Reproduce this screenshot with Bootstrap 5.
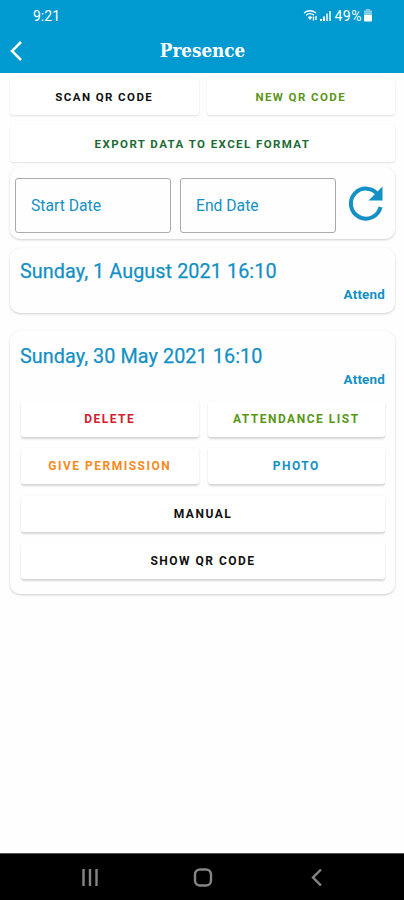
<!DOCTYPE html>
<html lang="en">
<head>
<meta charset="utf-8">
<meta name="viewport" content="width=device-width, initial-scale=1">
<title>Presence</title>
<link href="https://cdn.jsdelivr.net/npm/bootstrap@5.3.0/dist/css/bootstrap.min.css" rel="stylesheet">
<style>
:root { --brand: #0099d0; --ink: #1490c4; }
body { font-family: Roboto, sans-serif; background: #fefefe; }
.topbar { height: 73px; background: var(--brand); }
.statusline { height: 31px; padding: 0 31px 0 33px; font-size: 14px; line-height: 32px; }
.percent { margin-left: 1px; margin-right: 1px; letter-spacing: .5px; }
.titlebar { height: 38px; }
.titlebar h1 { font: bold 18.7px/38px "DejaVu Serif Condensed", "DejaVu Serif", serif; font-stretch: condensed; padding-right: 23px; }
.screen { padding: 6px 9px 0 10px; }
.act { height: 36px; padding: 0; border: 0; border-radius: 3px; background: #fff; font-weight: 700; font-size: 11.5px; line-height: 36px; letter-spacing: 1.42px; box-shadow: 0 1px 2px rgba(0,0,0,.11), 0 0 1px rgba(0,0,0,.08); }
.export { margin-top: 10px; height: 37px; }
.panel { border: 0; border-radius: 10px; background: #fefefe; box-shadow: 0 1px 2.5px rgba(0,0,0,.19); }
.dates { height: 72px; margin-top: 5px; padding: 4px 0 0 5px; gap: 9px; }
.dates svg { margin-left: 3px; margin-top: -5px; }
.field { width: 156px; height: 55px; border: 1px solid #aaa; border-radius: 3px; padding-left: 15px; font-size: 15.7px; line-height: 54px; color: var(--ink); }
.first, .second { padding: 12px 10px 0; }
.first { height: 65px; margin-top: 9px; }
.second { height: 263px; margin-top: 18px; padding-top: 14px; }
.when { font-size: 19.8px; letter-spacing: .08px; line-height: 24px; color: var(--ink); -webkit-text-stroke: .25px var(--ink); }
.state { margin-top: 3px; font-size: 13.4px; letter-spacing: .2px; line-height: 16px; font-weight: 700; color: var(--ink); }
.inner { grid-template-columns: 1fr 1fr; gap: 11.3px 9px; margin: 13px 0 0 1px; }
.inner .act { font-size: 12px; letter-spacing: 1.5px; box-shadow: 0 1.5px 2px rgba(0,0,0,.16); }
.inner .wide { grid-column: span 2; }
.ink { color: var(--ink); }
.leaf { color: #5a9618; }
.pine { color: #1d6b35; }
.rose { color: #cf2030; }
.amber { color: #f58a1f; }
.coal { color: #111; }
.softkeys { height: 47px; background: #000; border-top: 1px solid #555; }
</style>
</head>
<body>
<div class="d-flex flex-column vh-100 overflow-hidden">
  <header class="topbar text-white flex-shrink-0">
    <div class="statusline d-flex justify-content-between">
      <span>9:21</span>
      <div class="d-flex align-items-center">
        <svg width="31" height="14" viewBox="0 0 31 14" fill="none" stroke="#fff">
          <path d="M1 4Q7 -.5 13 4M3 6.300Q7 3 11 6.300" stroke-width="1.3"/>
          <path d="M4.700 8.300Q7 6.300 9.300 8.300L7 11Z" fill="#fff" stroke="none"/>
          <path d="M10.500 7.500v4M13 7v4" stroke-width="1.4"/>
          <path d="M18 12V10M21 12V7.500" stroke-width="2"/>
          <path d="M24 12V4.500M27 12V2" stroke-width="2" opacity=".75"/>
        </svg>
        <span class="percent">49%</span>
        <svg width="10" height="13" viewBox="0 0 10 13" fill="#fff"><path d="M3 0h4v1.500h2V6H1V1.500h2Z" opacity=".5"/><path d="M1 6h8v5.500a1 1 0 0 1-1 1H2a1 1 0 0 1-1-1Z"/></svg>
      </div>
    </div>
    <div class="titlebar d-flex align-items-center">
      <svg class="ms-2" width="16" height="22" viewBox="0 0 16 22" fill="none" stroke="#fff" stroke-width="2.5"><path d="M13 3L4 12l9 9"/></svg>
      <h1 class="m-0 flex-grow-1 text-center">Presence</h1>
    </div>
  </header>

  <main class="screen flex-grow-1">
    <div class="d-flex gap-2">
      <button class="btn act coal flex-fill w-50">SCAN QR CODE</button>
      <button class="btn act leaf flex-fill w-50">NEW QR CODE</button>
    </div>
    <button class="btn act pine w-100 d-block export">EXPORT DATA TO EXCEL FORMAT</button>
    <section class="card panel flex-row align-items-center dates">
      <div class="field">Start Date</div>
      <div class="field">End Date</div>
      <svg width="36" height="36" viewBox="0 0 36 36"><path d="M30.500 10.500A15 15 0 1 0 32.500 22" fill="none" stroke="#1490c4" stroke-width="4"/><path d="M34.500 1.500V15.500H20.500Z" fill="#1490c4"/></svg>
    </section>
    <section class="card panel first">
      <div class="when">Sunday, 1 August 2021 16:10</div>
      <div class="state text-end">Attend</div>
    </section>
    <section class="card panel second">
      <div class="when">Sunday, 30 May 2021 16:10</div>
      <div class="state text-end">Attend</div>
      <div class="inner d-grid">
        <button class="btn act rose">DELETE</button>
        <button class="btn act leaf">ATTENDANCE LIST</button>
        <button class="btn act amber">GIVE PERMISSION</button>
        <button class="btn act ink">PHOTO</button>
        <button class="btn act coal wide">MANUAL</button>
        <button class="btn act coal wide">SHOW QR CODE</button>
      </div>
    </section>
  </main>

  <footer class="softkeys flex-shrink-0 d-flex align-items-center">
    <svg width="404" height="46" viewBox="0 0 404 46" fill="none" stroke="#858585">
      <path d="M83.500 15v17M90 15v17M96.500 15v17" stroke-width="2.4"/>
      <rect x="195" y="15.500" width="16" height="16" rx="5" stroke-width="2.4"/>
      <path d="M321 15.500L313 23.500l8 8" stroke-width="2.4"/>
    </svg>
  </footer>
</div>
<script src="https://cdn.jsdelivr.net/npm/bootstrap@5.3.0/dist/js/bootstrap.bundle.min.js"></script>
</body>
</html>
